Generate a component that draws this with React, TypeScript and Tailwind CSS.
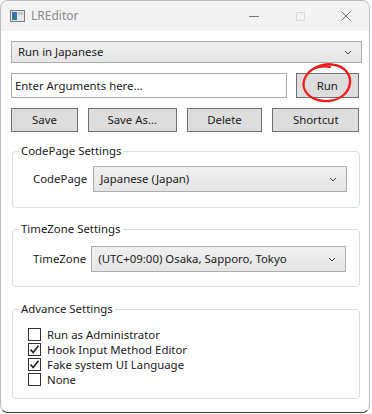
import React from "react";

const font = { fontFamily: '"Noto Sans", "Open Sans", sans-serif' };

function Chevron() {
  return (
    <svg width="8" height="5" viewBox="0 0 8 5" className="shrink-0">
      <path d="M1 1 L4 4 L7 1" fill="none" stroke="#404040" strokeWidth="1" />
    </svg>
  );
}

function Combo({ text, className }: { text: string; className: string }) {
  return (
    <div
      className={`flex items-center justify-between border border-[#acacac] bg-gradient-to-b from-[#f0f0f0] to-[#e5e5e5] pr-[9px] pl-[6px] text-[#1a1a1a] ${className}`}
    >
      <span>{text}</span>
      <Chevron />
    </div>
  );
}

function Button({ label, className }: { label: string; className: string }) {
  return (
    <div
      className={`flex items-center justify-center border border-[#707070] bg-[#dddddd] text-[#1a1a1a] ${className}`}
    >
      {label}
    </div>
  );
}

function Check({ label, checked }: { label: string; checked?: boolean }) {
  return (
    <div className="flex h-[15px] items-center gap-[6px] leading-[15px]">
      <div className="flex h-[13px] w-[13px] items-center justify-center border border-[#333333] bg-white">
        {checked && (
          <svg width="11" height="11" viewBox="0 0 11 11">
            <path d="M1.5 5.5 L4.2 8.5 L9.5 1.8" fill="none" stroke="#202020" strokeWidth="1.7" />
          </svg>
        )}
      </div>
      <span className="text-[#1a1a1a]">{label}</span>
    </div>
  );
}

function Group({ title, className, children }: { title: string; className: string; children: React.ReactNode }) {
  return (
    <fieldset className={`rounded-[4px] border border-[#d5dfe5] ${className}`}>
      <legend className="ml-[6px] px-[2px] text-[#1a1a1a]">{title}</legend>
      {children}
    </fieldset>
  );
}

export default function App() {
  return (
    <div className="h-[414px] w-[372px] bg-white text-[11.4px] leading-[16px]" style={font}>
      <div className="flex h-[413px] w-[370px] flex-col overflow-hidden rounded-[8px] border border-[#bdbdbd] border-b-[#3a3a3a] bg-white">
        {/* title bar */}
        <div className="flex h-[30px] shrink-0 items-center bg-[#f3f3f3]">
          <svg width="15" height="12" viewBox="0 0 15 12" className="ml-[9px]">
            <rect x="0.5" y="0.5" width="14" height="11" fill="#e8e8e8" stroke="#7a7a7a" />
            <rect x="2" y="2" width="5" height="8" fill="#2e7d8c" />
            <rect x="2" y="2" width="5" height="4" fill="#3f6fb0" />
            <rect x="8" y="2" width="5" height="3" fill="#c8c8c8" />
          </svg>
          <span className="ml-[6px] text-[12px] text-[#8a8a8a]">LREditor</span>
          <div className="ml-auto flex items-center">
            <div className="flex w-[46px] items-center justify-center">
              <div className="h-px w-[10px] bg-[#7a7a7a]" />
            </div>
            <div className="flex w-[46px] items-center justify-center">
              <div className="h-[9px] w-[9px] rounded-[1px] border border-[#d8d8d8]" />
            </div>
            <div className="flex w-[46px] items-center justify-center">
              <svg width="10" height="10" viewBox="0 0 10 10">
                <path d="M0.5 0.5 L9.5 9.5 M9.5 0.5 L0.5 9.5" stroke="#6a6a6a" strokeWidth="1" />
              </svg>
            </div>
          </div>
        </div>

        {/* body */}
        <div className="flex flex-col px-[10px] pt-[10px]">
          <Combo text="Run in Japanese" className="h-[22px] w-[351px]" />

          <div className="relative mt-[10px] flex h-[25px] gap-[9px]">
            <div className="flex w-[278px] items-center border border-[#abadb3] bg-white pl-[3px] text-[#1a1a1a]">
              Enter Arguments here...
            </div>
            <Button label="Run" className="w-[64px]" />
            <svg
              width="56"
              height="46"
              viewBox="0 0 56 46"
              className="pointer-events-none absolute left-[288px] top-[-11px]"
            >
              <path
                d="M11 9 C18 3 28 1 36 3 C46 5 52 13 51 21 C50 30 42 38 30 39 C18 40 8 35 5 26 C3 18 8 10 16 6 C21 4 27 4 31 5"
                fill="none"
                stroke="#ee1c1c"
                strokeWidth="2.3"
                strokeLinecap="round"
              />
            </svg>
          </div>

          <div className="mt-[10px] flex h-[24px] gap-[10px]">
            <Button label="Save" className="w-[68px]" />
            <Button label="Save As..." className="w-[90px]" />
            <Button label="Delete" className="w-[77px]" />
            <Button label="Shortcut" className="w-[88px]" />
          </div>

          <Group title="CodePage Settings" className="mt-[11px] ml-px h-[65px] w-[348px]">
            <div className="mt-[7px] flex items-center gap-[6px] pl-[20px]">
              <span className="text-[#1a1a1a]">CodePage</span>
              <Combo text="Japanese (Japan)" className="h-[26px] w-[254px]" />
            </div>
          </Group>

          <Group title="TimeZone Settings" className="mt-[13px] ml-px h-[66px] w-[348px]">
            <div className="mt-[9px] flex items-center gap-[5px] pl-[20px]">
              <span className="text-[#1a1a1a]">TimeZone</span>
              <Combo text="(UTC+09:00) Osaka, Sapporo, Tokyo" className="h-[26px] w-[255px]" />
            </div>
          </Group>

          <Group title="Advance Settings" className="mt-[14px] ml-px h-[98px] w-[348px]">
            <div className="mt-[10px] flex flex-col pl-[15px]">
              <Check label="Run as Administrator" />
              <Check label="Hook Input Method Editor" checked />
              <Check label="Fake system UI Language" checked />
              <Check label="None" />
            </div>
          </Group>
        </div>
      </div>
    </div>
  );
}
